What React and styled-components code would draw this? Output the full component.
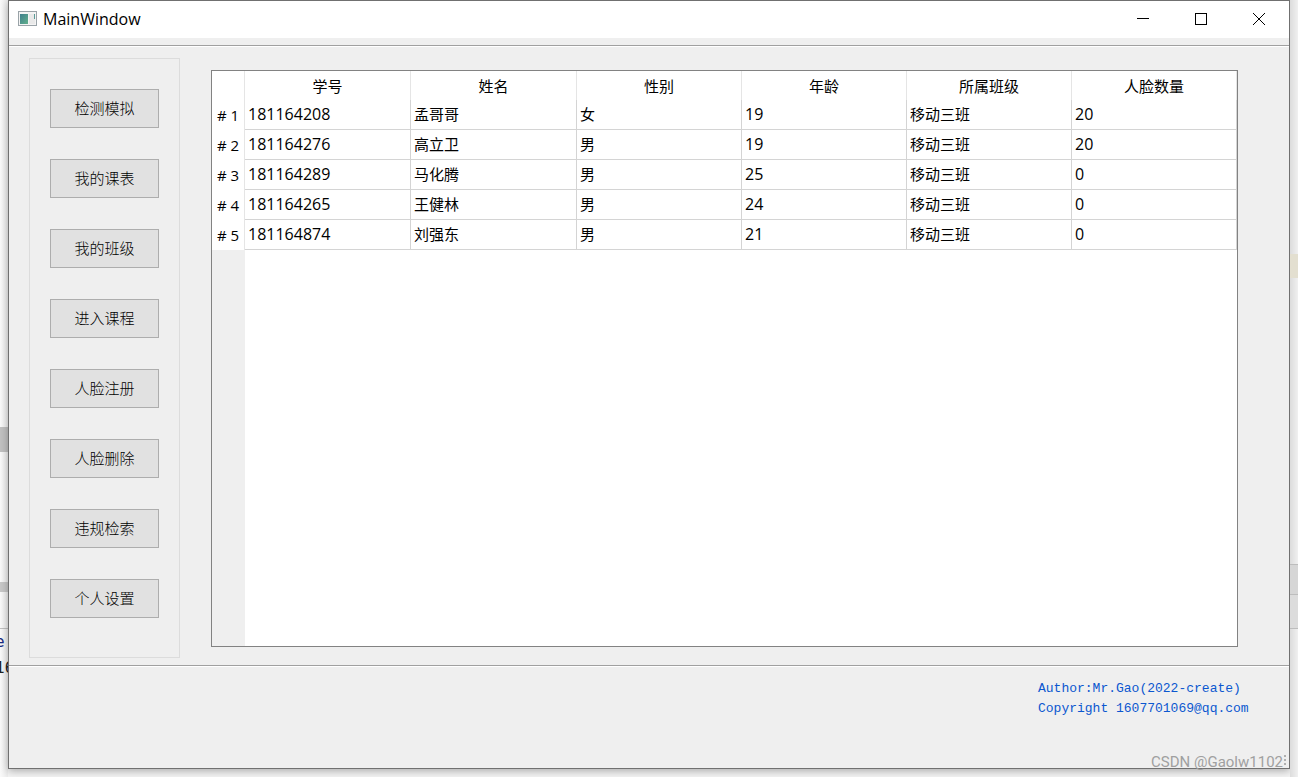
import React from "react";
import styled, { createGlobalStyle } from "styled-components";

const uiFont = `"Open Sans", "Noto Sans CJK SC", sans-serif`;
const cjkFont = `"Noto Sans CJK SC", sans-serif`;

const GlobalStyle = createGlobalStyle`
  *, *::before, *::after { box-sizing: border-box; }
  body { margin: 0; background: #f4f4f4; color: #000; font-family: ${uiFont}; }
`;

const Desktop = styled.div`
  position: relative;
  display: grid;
  grid-template-columns: 8px minmax(0, 1fr) 8px;
  min-height: 100vh;
  overflow: hidden;
`;

const Backdrop = styled.div`
  display: flex;
  flex-direction: column;
  overflow: hidden;
  background: ${(p) => (p.$side === "left" ? "linear-gradient(90deg, #fafafa, #ececec)" : "linear-gradient(90deg, #dcdcdc, #f0f0f0)")};
`;

const Band = styled.div`
  flex: none;
  height: ${(p) => p.$h}px;
  background: ${(p) => p.$c || "transparent"};
`;

const CodeLine = styled.div`
  flex: none;
  height: 26px;
  text-indent: -5px;
  font: 16px/26px "DejaVu Sans Mono", monospace;
  color: ${(p) => p.$c};
`;

const Window = styled.main`
  display: flex;
  flex-direction: column;
  margin-bottom: 8px;
  border: 1px solid #707070;
  background: #efefef;
  box-shadow: 0 2px 8px rgba(0, 0, 0, 0.3);
`;

const TitleBar = styled.header`
  display: flex;
  align-items: center;
  height: 37px;
  padding: 0 1px 2px 9px;
  background: #fff;
`;

const AppIcon = styled.svg`
  display: block;
  width: 19px;
  height: 16px;
`;

const Title = styled.h1`
  flex: 1;
  margin: 0 0 0 6px;
  font-size: 16px;
  line-height: 20px;
  font-weight: 400;
`;

const CaptionButton = styled.button`
  display: grid;
  place-items: center;
  width: 58px;
  height: 35px;
  padding: 0;
  border: 0;
  background: transparent;
  svg { display: block; }
`;

const MenuBar = styled.div`
  height: 7px;
`;

const Separator = styled.hr`
  width: 100%;
  height: 2px;
  margin: 0;
  border: 0;
  border-top: 1px solid #a0a0a0;
  border-bottom: 1px solid #fff;
`;

const Body = styled.div`
  display: flex;
  flex: 1;
  gap: 31px;
  padding: 11px 51px 7px 20px;
`;

const Sidebar = styled.nav`
  display: flex;
  flex-direction: column;
  gap: 31px;
  width: 151px;
  padding: 30px 20px;
  border: 1px solid #dcdcdc;
`;

const NavButton = styled.button`
  height: 39px;
  padding: 0 0 2px;
  border: 1px solid #adadad;
  background: #e1e1e1;
  color: #000;
  font: 300 15px/20px ${cjkFont};
`;

const TableFrame = styled.section`
  display: flex;
  flex: 1;
  flex-direction: column;
  min-width: 0;
  margin: 12px 0 11px;
  border: 1px solid #828282;
  background: #fff;
`;

const Table = styled.table`
  width: 100%;
  table-layout: fixed;
  border-collapse: separate;
  border-spacing: 0;
  font-size: 15px;
  line-height: 20px;
`;

const HeadCell = styled.th`
  width: ${(p) => p.$w || "auto"};
  height: 29px;
  padding: 0;
  border-right: 1px solid #e5e5e5;
  font-weight: 400;
  text-align: center;
`;

const RowHead = styled.th`
  padding: 0;
  border-right: 1px solid #e5e5e5;
  font-weight: 400;
  text-align: center;
`;

const Cell = styled.td`
  height: 30px;
  padding: 0 3px 2px;
  border-right: 1px solid #d4d4d4;
  border-bottom: 1px solid #d4d4d4;
  font-size: ${(p) => (p.$numeric ? 16 : 15)}px;
`;

const HeaderGutter = styled.div`
  flex: 1;
  width: 33px;
  background: #efefef;
`;

const Footer = styled.footer`
  display: flex;
  justify-content: flex-end;
  height: 101px;
  padding: 12px 35px 0 0;
`;

const Credits = styled.address`
  width: 216px;
  white-space: nowrap;
  color: #0b57d0;
  font: 13px/20px "Liberation Mono", monospace;
`;

const Watermark = styled.div`
  position: absolute;
  right: 15px;
  bottom: 5px;
  color: #a0a0a0;
  font: 15px/20px Roboto, sans-serif;
`;

const SizeGrip = styled.svg`
  position: absolute;
  right: 11px;
  bottom: 10px;
`;

const actions = ["检测模拟", "我的课表", "我的班级", "进入课程", "人脸注册", "人脸删除", "违规检索", "个人设置"];
const columns = [
  { label: "学号", width: "166px" },
  { label: "姓名", width: "166px" },
  { label: "性别" },
  { label: "年龄" },
  { label: "所属班级" },
  { label: "人脸数量" },
];
const students = [
  ["181164208", "孟哥哥", "女", "19", "移动三班", "20"],
  ["181164276", "高立卫", "男", "19", "移动三班", "20"],
  ["181164289", "马化腾", "男", "25", "移动三班", "0"],
  ["181164265", "王健林", "男", "24", "移动三班", "0"],
  ["181164874", "刘强东", "男", "21", "移动三班", "0"],
];

export default function App() {
  return (
    <>
      <GlobalStyle />
      <Desktop>
        <Backdrop $side="left" aria-hidden="true">
          <Band $h={427} />
          <Band $h={25} $c="#c1c1c1" />
          <Band $h={130} />
          <Band $h={10} $c="#c8c8c8" />
          <Band $h={36} />
          <Band $h={1} $c="#c0c0c0" />
          <CodeLine $c="#1a2a80">e</CodeLine>
          <CodeLine $c="#222">16</CodeLine>
        </Backdrop>
        <Window>
          <TitleBar>
            <AppIcon viewBox="0 0 19 16" aria-hidden="true">
              <defs>
                <linearGradient id="pane" x1="0" y1="0" x2="1" y2="1">
                  <stop offset="0" stopColor="#3d7f8c" />
                  <stop offset="1" stopColor="#62b08c" />
                </linearGradient>
              </defs>
              <rect x="0.5" y="0.5" width="18" height="14" fill="#f4f4f4" stroke="#9aa3a8" />
              <rect x="2" y="3" width="8" height="10" fill="url(#pane)" />
              <rect x="11" y="3" width="6" height="10" fill="#e9e9e9" />
              <path d="M16.5 3v5" stroke="#5b9c98" />
            </AppIcon>
            <Title>MainWindow</Title>
            <CaptionButton type="button" aria-label="Minimize">
              <svg width="12" height="12" viewBox="0 0 12 12"><path d="M0 5.5h12" stroke="#000" /></svg>
            </CaptionButton>
            <CaptionButton type="button" aria-label="Maximize">
              <svg width="12" height="12" viewBox="0 0 12 12"><rect x="0.5" y="0.5" width="11" height="11" fill="none" stroke="#000" /></svg>
            </CaptionButton>
            <CaptionButton type="button" aria-label="Close">
              <svg width="12" height="12" viewBox="0 0 12 12"><path d="M0 0l12 12M12 0L0 12" stroke="#000" /></svg>
            </CaptionButton>
          </TitleBar>
          <MenuBar />
          <Separator />
          <Body>
            <Sidebar>
              {actions.map((label) => (
                <NavButton key={label} type="button">{label}</NavButton>
              ))}
            </Sidebar>
            <TableFrame>
              <Table>
                <thead>
                  <tr>
                    <HeadCell $w="33px" />
                    {columns.map((c) => (
                      <HeadCell key={c.label} scope="col" $w={c.width}>{c.label}</HeadCell>
                    ))}
                  </tr>
                </thead>
                <tbody>
                  {students.map((row, i) => (
                    <tr key={row[0]}>
                      <RowHead scope="row"># {i + 1}</RowHead>
                      {row.map((value, j) => (
                        <Cell key={columns[j].label} $numeric={/^\d+$/.test(value)}>{value}</Cell>
                      ))}
                    </tr>
                  ))}
                </tbody>
              </Table>
              <HeaderGutter />
            </TableFrame>
          </Body>
          <Separator />
          <Footer>
            <Credits>
              Author:Mr.Gao(2022-create)
              <br />
              Copyright 1607701069@qq.com
            </Credits>
          </Footer>
        </Window>
        <Backdrop $side="right" aria-hidden="true">
          <Band $h={254} />
          <Band $h={24} $c="#e3dfd0" />
          <Band $h={286} />
          <Band $h={1} $c="#bdbdbd" />
          <Band $h={29} $c="#d6d6d6" />
          <Band $h={1} $c="#bdbdbd" />
          <Band $h={33} $c="#dcdcdc" />
          <Band $h={1} $c="#bdbdbd" />
        </Backdrop>
        <SizeGrip width="4" height="12" viewBox="0 0 4 12" aria-hidden="true">
          <path d="M1 0h2v2H1zM1 4h2v2H1zM1 8h2v2H1z" fill="#b0b0b0" />
        </SizeGrip>
        <Watermark>CSDN @Gaolw1102</Watermark>
      </Desktop>
    </>
  );
}
